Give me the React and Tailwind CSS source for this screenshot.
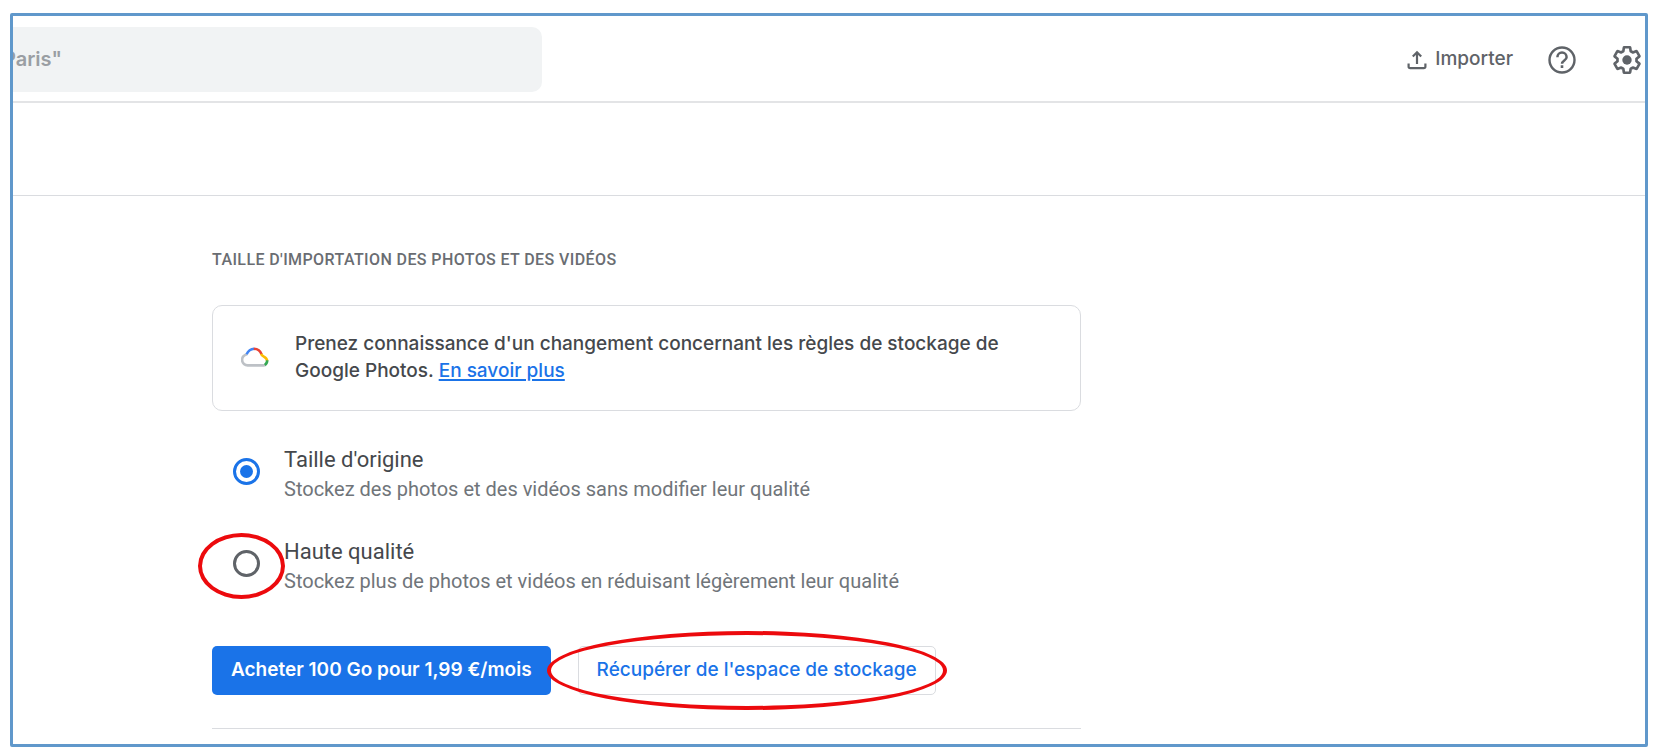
import { useState } from "react";

function UploadIcon() {
  return (
    <svg viewBox="0 0 20 20" className="size-5" fill="none" stroke="currentColor" strokeWidth="2.2" aria-hidden="true">
      <path d="M10 14V2.500M5.800 6.500 10 2.300l4.200 4.200" />
      <path d="M1.600 13.400v3.200a1.600 1.600 0 0 0 1.600 1.600h13.600a1.600 1.600 0 0 0 1.600-1.600v-3.200" />
    </svg>
  );
}

function HelpIcon() {
  return (
    <svg viewBox="0 0 28 28" className="size-7" fill="none" stroke="currentColor" aria-hidden="true">
      <circle cx="14" cy="14" r="12.5" strokeWidth="2.400" />
      <path d="M9.400 11.200a4.600 4.600 0 0 1 9.200 0c0 3.200-4.600 3.400-4.600 6.600" strokeWidth="2.500" />
      <path d="M12.700 19.300h2.600v2.600h-2.600z" fill="currentColor" stroke="none" />
    </svg>
  );
}

function GearIcon() {
  return (
    <svg viewBox="1 1 22 22" className="size-7" aria-hidden="true">
      <path
        fill="none"
        stroke="currentColor"
        strokeWidth="2.1"
        strokeLinejoin="round"
        d="M19.43 12.98c.04-.32.07-.64.07-.98s-.03-.66-.07-.98l2.11-1.65c.19-.15.24-.42.12-.64l-2-3.46c-.09-.16-.26-.25-.44-.25-.06 0-.12.01-.17.03l-2.49 1c-.52-.4-1.08-.73-1.69-.98l-.38-2.65C14.46 2.18 14.25 2 14 2h-4c-.25 0-.46.18-.49.42l-.38 2.65c-.61.25-1.17.59-1.69.98l-2.49-1c-.06-.02-.12-.03-.18-.03-.17 0-.34.09-.43.25l-2 3.46c-.13.22-.07.49.12.64l2.11 1.65c-.04.32-.07.65-.07.98s.03.66.07.98l-2.11 1.65c-.19.15-.24.42-.12.64l2 3.46c.09.16.26.25.44.25.06 0 .12-.01.17-.03l2.49-1c.52.4 1.08.73 1.69.98l.38 2.65c.03.24.24.42.49.42h4c.25 0 .46-.18.49-.42l.38-2.65c.61-.25 1.17-.59 1.69-.98l2.49 1c.06.02.12.03.18.03.17 0 .34-.09.43-.25l2-3.46c.12-.22.07-.49-.12-.64l-2.11-1.65z"
      />
      <circle cx="12" cy="12" r="3.700" fill="currentColor" />
    </svg>
  );
}

function CloudIcon() {
  return (
    <svg viewBox="0 0 28 20" className="h-5 w-7 shrink-0" fill="none" strokeWidth="2.6" aria-hidden="true">
      <path stroke="#bdc1c6" d="M6.4 7.2A5.6 5.6 0 0 0 7 18.4h15.5a4.6 4.6 0 0 0 2.2-.6" />
      <path stroke="#4285f4" d="M5.6 7.3C7 4.200 9.600 2 13.200 1.800" />
      <path stroke="#ea4335" d="M12.800 1.800c4 0 6.600 2.200 7.800 5.600" />
      <path stroke="#fbbc04" d="M20.200 6.800c.4 1.500 1 2 2.600 2.800 1.800.9 3.200 2.200 3.400 4.200" />
      <path stroke="#34a853" d="M26.200 13.200c.1 2-.6 3.500-2.400 4.800" />
    </svg>
  );
}

const OPTIONS = [
  {
    id: "original",
    title: "Taille d'origine",
    text: "Stockez des photos et des vidéos sans modifier leur qualité",
  },
  {
    id: "high",
    title: "Haute qualité",
    text: "Stockez plus de photos et vidéos en réduisant légèrement leur qualité",
    circled: true,
  },
];

export default function App() {
  const [size, setSize] = useState("original");

  return (
    <div className="bg-white pt-[13px] pr-[9px] pb-[9px] pl-[10px] font-['Inter',sans-serif] text-[#45484c]">
      <div className="overflow-hidden rounded-[2px] border-3 border-[#6098cb]">
        <header className="flex items-center justify-between border-b-2 border-[#e3e4e6] pt-[11px] pr-1 pb-[9px]">
          <div className="h-[65px] w-[529px] max-w-[50%] overflow-hidden rounded-r-[10px] bg-[#f1f3f4]">
            <input
              type="search"
              aria-label="Rechercher"
              placeholder={'Paris"'}
              className="-ml-2.5 h-full w-full bg-transparent pb-0.5 text-xl font-semibold outline-none placeholder:text-[#9a9ea3]"
            />
          </div>
          <div className="flex items-center text-[#5f6368]">
            <button type="button" className="flex items-center gap-2 text-[19px] font-medium">
              <UploadIcon />
              Importer
            </button>
            <button type="button" aria-label="Aide" className="ml-[35px]">
              <HelpIcon />
            </button>
            <button type="button" aria-label="Paramètres" className="ml-[37px]">
              <GearIcon />
            </button>
          </div>
        </header>
        <div className="h-[93px] border-b border-[#dadce0]" />

        <main className="ml-[199px] max-w-[869px] pt-[52px] pb-[15px]">
          <h2 className="font-['Roboto',sans-serif] text-base leading-6 font-medium tracking-wide text-[#6a6d72] uppercase">
            Taille d'importation des photos et des vidéos
          </h2>

          <section className="mt-[33px] flex items-center gap-[26px] rounded-[10px] border border-[#dadce0] pt-6 pr-10 pb-[26px] pl-7">
            <CloudIcon />
            <p className="text-[19px] leading-[27px] font-medium">
              Prenez connaissance d'un changement concernant les règles de stockage de Google Photos.{" "}
              <a href="#savoir" className="text-[#1a73e8] underline decoration-2 underline-offset-2">
                En savoir plus
              </a>
            </p>
          </section>

          <fieldset className="mt-[34px] flex flex-col gap-[33px] font-['Roboto',sans-serif]">
            {OPTIONS.map((o) => (
              <div key={o.id} className="relative flex items-start gap-6 pl-[21px]">
                <input
                  type="radio"
                  id={o.id}
                  name="size"
                  checked={size === o.id}
                  onChange={() => setSize(o.id)}
                  className="mt-[13px] size-[27px] shrink-0 appearance-none rounded-full border-3 border-[#5f6368] bg-clip-content p-1 checked:border-[#1a73e8] checked:bg-[#1a73e8]"
                />
                <label htmlFor={o.id} className="text-[22px] leading-[30px]">
                  {o.title}
                  <span className="block text-xl leading-[29px] text-[#70757a]">{o.text}</span>
                </label>
                {o.circled && (
                  <span className="pointer-events-none absolute -top-1 -left-[14px] h-[66px] w-[87px] rounded-[50%] border-4 border-[#ec0a0d]" />
                )}
              </div>
            ))}
          </fieldset>

          <div className="mt-[50px] flex gap-[27px] text-[19px]">
            <button type="button" className="h-[49px] rounded-[5px] bg-[#1a73e8] px-[19px] font-semibold text-white">
              Acheter 100 Go pour 1,99 €/mois
            </button>
            <div className="relative">
              <button type="button" className="h-[49px] rounded-[5px] border border-[#dadce0] px-[18px] font-medium text-[#1a73e8]">
                Récupérer de l'espace de stockage
              </button>
              <span className="pointer-events-none absolute -top-[15px] -right-[11px] -left-[31px] h-[79px] rounded-[50%] border-4 border-[#ec0a0d]" />
            </div>
          </div>

          <hr className="mt-[33px] border-[#dadce0]" />
        </main>
      </div>
    </div>
  );
}
